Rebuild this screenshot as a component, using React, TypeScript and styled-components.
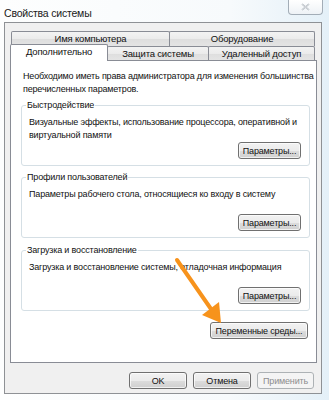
import React from "react";
import styled, { createGlobalStyle } from "styled-components";

const FONT = `"Liberation Sans", Arial, sans-serif`;

const GlobalStyle = createGlobalStyle`
  html, body { margin: 0; padding: 0; }
  body {
    width: 329px;
    height: 400px;
    overflow: hidden;
    font-family: ${FONT};
    font-size: 9px;
    letter-spacing: -0.17px;
    color: #111;
  }
`;

const Desktop = styled.div`
  position: relative;
  width: 329px;
  height: 400px;
  overflow: hidden;
  display: flex;
  flex-direction: column;
  background: linear-gradient(90deg, #fdfefe 0%, #f7fafc 70%, #e4f0f8 100%);
`;

const TitleBar = styled.div`
  height: 22px;
  flex-shrink: 0;
  display: flex;
  align-items: flex-start;
`;

const Title = styled.span`
  padding: 7px 0 0 4px;
  line-height: 12px;
  font-size: 10.5px;
  letter-spacing: -0.2px;
  color: #1a1a1a;
`;

const CloseButton = styled.div`
  margin-left: auto;
  margin-right: 6px;
  width: 35px;
  height: 15px;
  box-sizing: border-box;
  border: 1px solid #a3adb7;
  border-top: none;
  border-radius: 0 0 4px 4px;
  background: linear-gradient(#ffffff, #eef2f6);
  display: flex;
  align-items: center;
  justify-content: center;
`;

const Client = styled.div`
  margin: 0 7px 0 4px;
  height: 372px;
  box-sizing: border-box;
  border: 1px solid #8e9195;
  background: #f0f0f0;
  padding: 8px 4px 0 5px;
  display: flex;
  flex-direction: column;
`;

const TabRow = styled.div<{ $front?: boolean }>`
  display: flex;
  align-items: flex-end;
  height: ${(p) => (p.$front ? 14 : 15)}px;
  margin: ${(p) => (p.$front ? "0 2px 0 0" : "0 2px 0 1px")};
`;

const Tab = styled.div<{ $w?: number; $selected?: boolean }>`
  box-sizing: border-box;
  ${(p) => (p.$w ? `width: ${p.$w}px; flex-shrink: 0;` : "flex: 1;")}
  height: ${(p) => (p.$selected ? "17px" : "100%")};
  margin-bottom: ${(p) => (p.$selected ? "-1px" : "0")};
  border: 1px solid #898c95;
  border-bottom: none;
  border-radius: 2px 2px 0 0;
  & + & { margin-left: -1px; }
  position: relative;
  z-index: ${(p) => (p.$selected ? 2 : 1)};
  background: ${(p) =>
    p.$selected ? "#ffffff" : "linear-gradient(#f3f3f3 0%, #ebebeb 50%, #dedede 51%, #e4e4e4 100%)"};
  display: flex;
  align-items: center;
  justify-content: center;
  padding-bottom: ${(p) => (p.$selected ? "2px" : "0")};
  line-height: 12px;
  font-size: 9.5px;
  white-space: nowrap;
`;

const Panel = styled.div`
  width: 307px;
  height: 303px;
  box-sizing: border-box;
  background: #ffffff;
  border: 1px solid #898c95;
  display: flex;
  flex-direction: column;
  position: relative;
  z-index: 1;
`;

const Intro = styled.p`
  margin: 9px 0 0 12px;
  line-height: 13px;
  white-space: nowrap;
`;

const Group = styled.fieldset<{ $mt: number }>`
  margin: ${(p) => p.$mt}px 6px 0 10px;
  padding: 0;
  min-width: 0;
  border: 1px solid #d5dfe5;
  border-radius: 3px;
`;

const Legend = styled.legend`
  margin-left: 4px;
  padding: 0 1px;
  line-height: 12px;
`;

const GroupBody = styled.div`
  padding: 5px 8px 6px 7px;
  display: flex;
  flex-direction: column;
`;

const GroupText = styled.div`
  line-height: 13px;
  min-height: 26px;
  white-space: nowrap;
`;

const ButtonRow = styled.div<{ $mt?: number; $mr?: number }>`
  display: flex;
  justify-content: flex-end;
  gap: 6px;
  margin-top: ${(p) => p.$mt ?? 0}px;
  margin-right: ${(p) => p.$mr ?? 0}px;
`;

const Button = styled.div<{ $w: number; $disabled?: boolean }>`
  width: ${(p) => p.$w}px;
  height: 17px;
  box-sizing: border-box;
  border: 1px solid ${(p) => (p.$disabled ? "#adb2b5" : "#707070")};
  border-radius: 3px;
  background: ${(p) =>
    p.$disabled
      ? "#f4f4f4"
      : "linear-gradient(#f2f2f2 0%, #ebebeb 50%, #dddddd 51%, #cfcfcf 100%)"};
  box-shadow: inset 0 0 0 1px ${(p) => (p.$disabled ? "#f4f4f4" : "rgba(255,255,255,0.7)")};
  color: ${(p) => (p.$disabled ? "#8d8d8d" : "#111")};
  display: flex;
  align-items: center;
  justify-content: center;
  white-space: nowrap;
`;

const Footer = styled.div`
  display: flex;
  justify-content: flex-end;
  gap: 6px;
  margin: 9px 3px 0 0;
`;

const Arrow = styled.svg`
  position: absolute;
  left: 0;
  top: 0;
  width: 329px;
  height: 400px;
  pointer-events: none;
  z-index: 5;
`;

export default function App() {
  return (
    <>
      <GlobalStyle />
      <Desktop>
        <TitleBar>
          <Title>Свойства системы</Title>
          <CloseButton>
            <svg width="9" height="8" viewBox="0 0 9 8">
              <path d="M1 1 L8 7 M8 1 L1 7" stroke="#a9b0b8" strokeWidth="1.6" fill="none" />
              <path d="M1 1 L8 7 M8 1 L1 7" stroke="#ffffff" strokeWidth="0.5" fill="none" />
            </svg>
          </CloseButton>
        </TitleBar>
        <Client>
          <TabRow>
            <Tab $w={159}>Имя компьютера</Tab>
            <Tab>Оборудование</Tab>
          </TabRow>
          <TabRow $front>
            <Tab $w={98} $selected>
              Дополнительно
            </Tab>
            <Tab $w={102}>Защита системы</Tab>
            <Tab>Удаленный доступ</Tab>
          </TabRow>
          <Panel>
            <Intro>
              Необходимо иметь права администратора для изменения большинства
              <br />
              перечисленных параметров.
            </Intro>
            <Group $mt={3}>
              <Legend>Быстродействие</Legend>
              <GroupBody>
                <GroupText>
                  Визуальные эффекты, использование процессора, оперативной и
                  <br />
                  виртуальной памяти
                </GroupText>
                <ButtonRow>
                  <Button $w={63}>Параметры...</Button>
                </ButtonRow>
              </GroupBody>
            </Group>
            <Group $mt={5}>
              <Legend>Профили пользователей</Legend>
              <GroupBody>
                <GroupText>Параметры рабочего стола, относящиеся ко входу в систему</GroupText>
                <ButtonRow>
                  <Button $w={63}>Параметры...</Button>
                </ButtonRow>
              </GroupBody>
            </Group>
            <Group $mt={6}>
              <Legend>Загрузка и восстановление</Legend>
              <GroupBody>
                <GroupText>Загрузка и восстановление системы, отладочная информация</GroupText>
                <ButtonRow>
                  <Button $w={63}>Параметры...</Button>
                </ButtonRow>
              </GroupBody>
            </Group>
            <ButtonRow $mt={11} $mr={8}>
              <Button $w={98}>Переменные среды...</Button>
            </ButtonRow>
          </Panel>
          <Footer>
            <Button $w={58}>OK</Button>
            <Button $w={58}>Отмена</Button>
            <Button $w={57} $disabled>
              Применить
            </Button>
          </Footer>
        </Client>
        <Arrow viewBox="0 0 329 400">
          <defs>
            <filter id="glow" x="-20%" y="-20%" width="140%" height="140%">
              <feGaussianBlur stdDeviation="0.6" />
            </filter>
          </defs>
          <g filter="url(#glow)">
            <line x1="177" y1="260" x2="211" y2="309" stroke="#f7931e" strokeWidth="4" strokeLinecap="round" />
            <polygon points="221,323 202,315 219,302" fill="#f7931e" />
          </g>
        </Arrow>
      </Desktop>
    </>
  );
}
